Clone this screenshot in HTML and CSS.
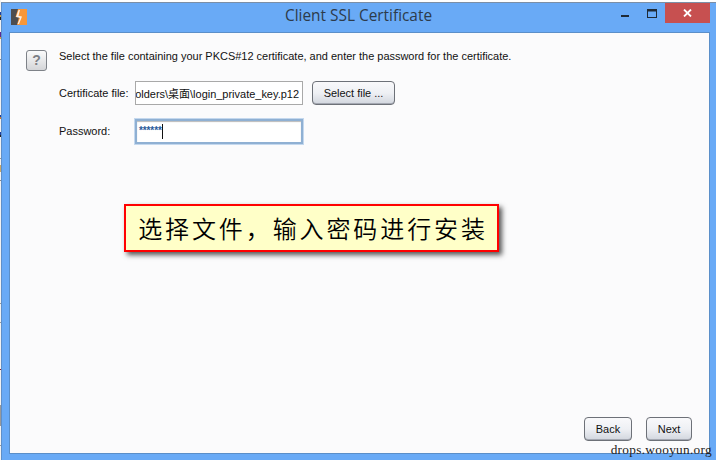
FILE: index.html
```html
<!DOCTYPE html>
<html lang="zh">
<head>
<meta charset="utf-8">
<title>Client SSL Certificate</title>
<link rel="stylesheet" href="styles.css">
</head>
<body>
<div class="behind-strip"></div>
<div class="window">
  <header class="titlebar">
    <svg class="app-icon" width="16" height="16" viewBox="0 0 16 16">
      <rect width="8" height="16" fill="#4d4d4f"/>
      <rect x="8" width="8" height="16" fill="#f7973a"/>
      <path d="M7 0 L4.5 8 L8 8 L6 16 L8 16 L8 15 L11 8 L8 7.5 L10 0 Z" fill="#f7973a"/>
      <path d="M7.5 1 L5 8 L9 9 L6.5 15 L8 15 L11 7.5 L7.5 6.8 L9 1 Z" fill="#fff" opacity=".85"/>
    </svg>
    <h1 class="title">Client SSL Certificate</h1>
    <div class="controls">
      <svg class="ctl-min" width="8" height="2" viewBox="0 0 8 2"><rect width="8" height="2" fill="#1f2a36"/></svg>
      <svg class="ctl-max" width="10" height="9" viewBox="0 0 10 9"><rect x=".5" y=".5" width="9" height="8" fill="none" stroke="#1f2a36"/><rect x="0" y="0" width="10" height="2.5" fill="#1f2a36"/></svg>
      <div class="ctl-close">
        <svg width="9" height="8" viewBox="0 0 9 8"><path d="M1 .5 L8 7.5 M8 .5 L1 7.5" stroke="#fff" stroke-width="1.8" fill="none"/></svg>
      </div>
    </div>
  </header>
  <main class="content">
    <div class="intro">
      <div class="help">?</div>
      <p class="intro-text">Select the file containing your PKCS#12 certificate, and enter the password for the certificate.</p>
    </div>
    <div class="form-row file-row">
      <label class="label">Certificate file:</label>
      <div class="field"><span class="field-scroll">Folders\桌面\login_private_key.p12</span></div>
      <button class="btn btn-select">Select file ...</button>
    </div>
    <div class="form-row pass-row">
      <label class="label">Password:</label>
      <div class="field field-focus"><span class="stars">******</span><span class="caret"></span></div>
    </div>
    <div class="spacer"></div>
    <div class="footer">
      <button class="btn btn-back">Back</button>
      <button class="btn btn-next">Next</button>
    </div>
  </main>
</div>
<div class="callout">选择文件，输入密码进行安装</div>
<div class="watermark">drops.wooyun.org</div>
</body>
</html>
```
FILE: styles.css
```css
* { box-sizing: border-box; }
html, body { margin: 0; padding: 0; }
body {
  width: 716px;
  height: 460px;
  overflow: hidden;
  background: #fff;
  position: relative;
  font-family: "Liberation Sans", Arial, sans-serif;
}
.behind-strip {
  position: absolute;
  left: 0;
  top: 0;
  width: 1px;
  height: 460px;
  background: linear-gradient(#f2f2f2 0 12px, #1a3fa0 12px 15px, #c9a04a 15px 17px, #222 17px 20px, #f2f2f2 20px 32px,
    #5a2a90 32px 37px, #c9a04a 37px 39px, #f2f2f2 39px 59px, #888 59px 60px, #f2f2f2 60px 115px,
    #1a3fa0 115px 117px, #c97a2a 117px 119px, #f2f2f2 119px 132px, #1a3fa0 132px 135px, #222 135px 137px,
    #f2f2f2 137px 158px, #999 158px 159px, #f2f2f2 159px 165px, #c9a86a 165px 172px, #f2f2f2 172px 180px,
    #888 180px 181px, #f2f2f2 181px 303px, #999 303px 304px, #f2f2f2 304px 322px, #999 322px 323px,
    #f2f2f2 323px 369px, #8a1a2a 369px 370px, #f2f2f2 370px 405px, #999 405px 426px, #f2f2f2 426px 445px,
    #999 445px 446px, #f2f2f2 446px);
}
.window {
  margin: 2px 0 0 1px;
  width: 715px;
  height: 458px;
  background: #69aaf6;
  border-top: 1px solid #7c8fa6;
  border-left: 1px solid #5f8fc8;
  display: flex;
  flex-direction: column;
}
.titlebar {
  height: 29px;
  flex: none;
  display: flex;
  align-items: center;
  position: relative;
  padding-left: 9px;
}
.app-icon { flex: none; margin-top: -1px; }
.title {
  margin: 0;
  position: absolute;
  left: 283px;
  top: 3px;
  font: 400 15.4px/20px "Open Sans", sans-serif;
  color: #2d3b4a;
  white-space: nowrap;
}
.controls {
  position: absolute;
  top: 0;
  right: 6px;
  display: flex;
  align-items: flex-start;
}
.ctl-min { margin-top: 12px; margin-right: 18px; }
.ctl-max { margin-top: 6px; margin-right: 8px; }
.ctl-close {
  width: 45px;
  height: 20px;
  background: #c75050;
  display: flex;
  align-items: center;
  justify-content: center;
}
.content {
  margin: 0 6px 6px 7px;
  flex: 1;
  min-height: 0;
  background: #fbfbfc;
  border: 1px solid #5b8fc9;
  padding: 17px 16px 11px 16px;
  display: flex;
  flex-direction: column;
}
.intro { display: flex; align-items: flex-start; }
.help {
  width: 21px;
  height: 21px;
  flex: none;
  border: 1px solid #7e8288;
  border-radius: 3px;
  background: linear-gradient(#fbfbfb, #d4d5d8);
  text-align: center;
  font: 700 14px/19px "Liberation Sans", sans-serif;
  color: #7d8085;
}
.intro-text {
  margin: 0 0 0 12px;
  font-size: 10.97px;
  line-height: 13px;
  color: #111;
  white-space: nowrap;
}
.form-row { display: flex; align-items: center; }
.file-row { margin-top: 10px; }
.pass-row { margin-top: 14px; }
.label {
  width: 76px;
  margin-left: 33px;
  flex: none;
  font-size: 10.97px;
  color: #111;
  white-space: nowrap;
}
.pass-row .label { padding-bottom: 2px; }
.field {
  width: 168px;
  height: 24px;
  background: #fff;
  border: 1px solid #a9a9a9;
  overflow: hidden;
  display: flex;
  align-items: center;
  justify-content: flex-end;
  padding: 0 3px 0 4px;
  font-size: 10.97px;
  color: #111;
  white-space: nowrap;
  font-family: "Liberation Sans", "Noto Sans CJK SC", sans-serif;
}
.field-scroll { flex: none; }
.field-focus {
  height: 25px;
  justify-content: flex-start;
  border: 2px solid #8fb0d3;
  box-shadow: inset 0 1px 1px #bbb, 0 0 0 1px #c4d8ee;
  padding: 0 2px;
  color: #2a5a9a;
}
.stars { font-size: 10px; font-weight: 700; margin-top: -2px; letter-spacing: -.1px; }
.caret { width: 1px; height: 15px; background: #111; }
.btn {
  height: 24px;
  padding: 0;
  border: 1px solid #6d7178;
  border-radius: 4px;
  background: linear-gradient(#f9f9fb 0%, #eef0f4 50%, #d2d6de 100%);
  box-shadow: inset 0 -1px 0 #a4a8b2;
  font: 10.97px "Liberation Sans", sans-serif;
  color: #111;
}
.btn-select { width: 83px; margin-left: 9px; }
.spacer { flex: 1; }
.footer { display: flex; justify-content: flex-end; gap: 14px; padding-bottom: 1px; padding-right: 1px; }
.btn-back { width: 48px; }
.btn-next { width: 46px; }
.callout {
  position: absolute;
  left: 124px;
  top: 204px;
  width: 375px;
  height: 48px;
  padding-left: 3px;
  background: #ffffc8;
  border: 2px solid #f00;
  box-shadow: 3px 3px 5px #555;
  font: 350 24px/44px "Noto Sans CJK SC", sans-serif;
  color: #000;
  letter-spacing: 2.9px;
  text-align: center;
  white-space: nowrap;
}
.watermark {
  position: absolute;
  right: 4px;
  top: 442px;
  font: 13.3px/16px "Liberation Serif", serif;
  letter-spacing: .3px;
  color: #222;
}
```
